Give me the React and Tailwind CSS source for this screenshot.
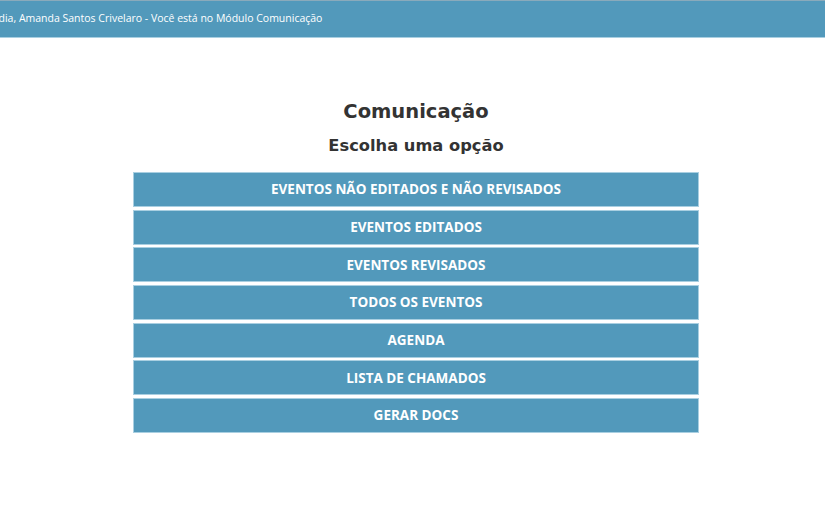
const options = [
  'EVENTOS NÃO EDITADOS E NÃO REVISADOS',
  'EVENTOS EDITADOS',
  'EVENTOS REVISADOS',
  'TODOS OS EVENTOS',
  'AGENDA',
  'LISTA DE CHAMADOS',
  'GERAR DOCS',
];

export default function App() {
  return (
    <div className="min-h-screen bg-white" style={{ fontFamily: '"Open Sans", sans-serif' }}>
      <div className="h-[38px] bg-[#5299bb] border-t border-[#8aaabb] border-b border-b-[#a9cfe1] flex items-center overflow-hidden">
        <span className="ml-[-27px] text-[10.5px] text-white whitespace-nowrap">
          Bom dia, Amanda Santos Crivelaro - Você está no Módulo Comunicação
        </span>
      </div>

      <div className="pt-[60px] pl-[7px] flex flex-col items-center">
        <h1 className="text-[19.5px] font-bold text-[#333] leading-[28px]" style={{ fontFamily: '"DejaVu Sans", sans-serif' }}>
          Comunicação
        </h1>
        <h2 className="mt-[8px] text-[16.3px] font-bold text-[#333] leading-[24px]" style={{ fontFamily: '"DejaVu Sans", sans-serif' }}>
          Escolha uma opção
        </h2>
        <div className="mt-[14px] w-[566px] flex flex-col gap-[2.67px]">
          {options.map((label) => (
            <button
              key={label}
              className="h-[35px] w-full bg-[#5299bb] border border-[#a9cfe1] text-white text-[13.5px] font-bold"
            >
              {label}
            </button>
          ))}
        </div>
      </div>
    </div>
  );
}
